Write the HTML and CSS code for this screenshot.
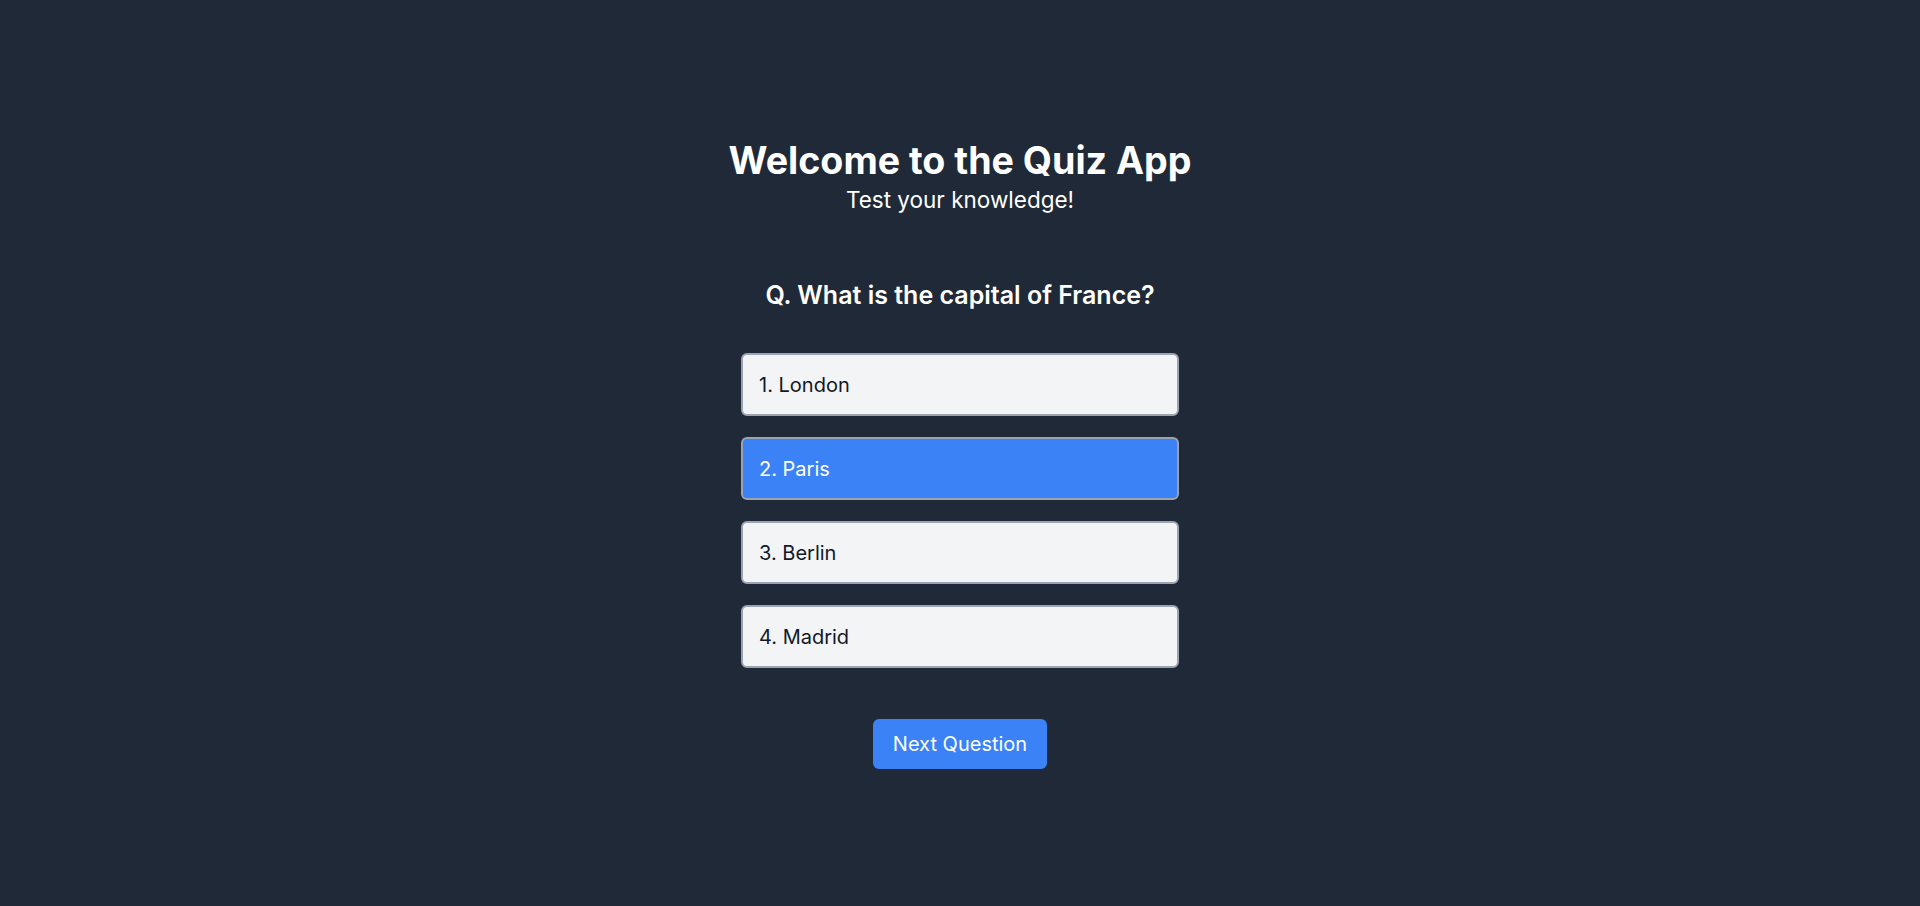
FILE: index.html
```html
<!DOCTYPE html>
<html lang="en">
<head>
<meta charset="utf-8">
<title>Quiz App</title>
<link rel="stylesheet" href="styles.css">
</head>
<body>
<main class="app">
  <header class="header">
    <h1 class="title">Welcome to the Quiz App</h1>
    <p class="subtitle">Test your knowledge!</p>
  </header>
  <section class="quiz">
    <h2 class="question">Q. What is the capital of France?</h2>
    <div class="options">
      <button class="option">1. London</button>
      <button class="option option-selected">2. Paris</button>
      <button class="option">3. Berlin</button>
      <button class="option">4. Madrid</button>
    </div>
    <button class="next">Next Question</button>
  </section>
</main>
</body>
</html>
```
FILE: styles.css
```css
* { box-sizing: border-box; }
html, body { margin: 0; padding: 0; }
body {
  background: #1f2937;
  color: #ffffff;
  font-family: Inter, "Noto Sans", "Liberation Sans", sans-serif;
  min-height: 906px;
}
.app {
  display: flex;
  flex-direction: column;
  align-items: center;
  padding-top: 141px;
}
.header {
  display: flex;
  flex-direction: column;
  align-items: center;
}
.title {
  margin: 0;
  font-size: 37.6px;
  line-height: 40px;
  font-weight: 700;
}
.subtitle {
  margin: 5px 0 0;
  font-size: 22.5px;
  line-height: 28px;
  font-weight: 400;
}
.quiz {
  display: flex;
  flex-direction: column;
  align-items: center;
  margin-top: 64.5px;
}
.question {
  margin: 0;
  font-size: 25px;
  line-height: 32px;
  font-weight: 600;
}
.options {
  display: flex;
  flex-direction: column;
  gap: 21px;
  margin-top: 42px;
  width: 438px;
}
.option {
  display: block;
  width: 100%;
  height: 63px;
  text-align: left;
  padding: 2px 16px 0;
  font-family: inherit;
  font-size: 20px;
  line-height: 28px;
  color: #111827;
  background: #f3f4f6;
  border: 2px solid #9ca3af;
  border-radius: 6px;
}
.option-selected {
  background: #3b82f6;
  color: #ffffff;
}
.next {
  margin-top: 51px;
  padding: 11px 20px;
  font-family: inherit;
  font-size: 20px;
  line-height: 28px;
  color: #ffffff;
  background: #3b82f6;
  border: none;
  border-radius: 6px;
}
```
